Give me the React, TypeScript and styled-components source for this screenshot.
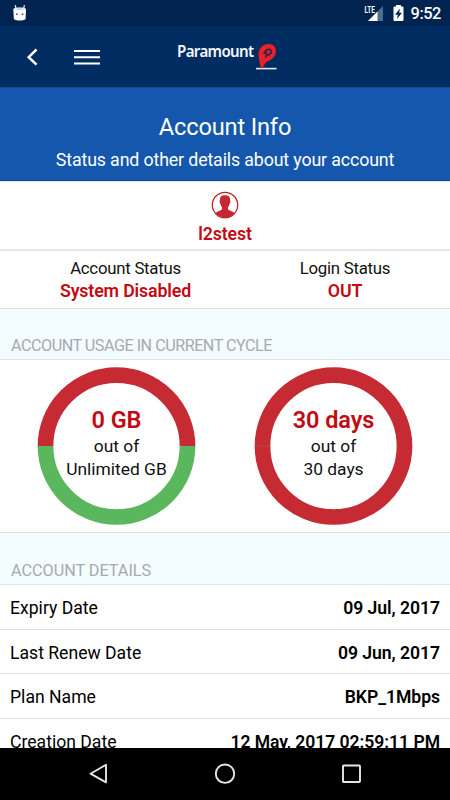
import React from "react";
import styled, { createGlobalStyle } from "styled-components";

const GlobalStyle = createGlobalStyle`
  * { box-sizing: border-box; }
  html, body { margin: 0; padding: 0; }
  body {
    width: 450px; height: 800px; overflow: hidden; background: #fff;
    font-family: Roboto, "Liberation Sans", sans-serif; color: #111;
  }
`;

const Screen = styled.div`
  width: 450px; height: 800px; display: flex; flex-direction: column; overflow: hidden;
`;
const StatusBar = styled.header`
  flex: none; height: 26px; background: #00234f; color: #fff;
  display: flex; align-items: center; justify-content: space-between; padding: 0 9px 0 12px;
`;
const Tray = styled.div`
  display: flex; align-items: center;
`;
const Clock = styled.span`
  font-size: 16.4px; font-weight: 500; line-height: 20px; letter-spacing: -0.45px; margin: 2px 0 0 7px;
`;
const AppBar = styled.nav`
  flex: none; height: 61px; background: #002c62; display: flex; align-items: flex-start; padding: 22px 0 0 26px;
`;
const Brand = styled.div`
  display: flex; align-items: flex-start; margin: -9px 0 0 77px; color: #f5f8fc;
`;
const BrandName = styled.span`
  width: 79px; font: 600 16.4px/24px "Noto Sans", sans-serif; letter-spacing: -0.7px; white-space: nowrap;
  transform: scaleX(0.92); transform-origin: left;
`;
const Hero = styled.section`
  flex: none; height: 94px; background: #1457ad; border-top: 1px solid #0e4a96; border-bottom: 1px solid #0b4a9d;
  color: #fff; text-align: center; padding-top: 24px;
`;
const Title = styled.h1`
  margin: 0; font-size: 23.6px; font-weight: 400; line-height: 30px; letter-spacing: -0.15px;
`;
const Subtitle = styled.p`
  margin: 6px 0 0; font-size: 17.8px; line-height: 24px; letter-spacing: -0.14px;
`;
const UserPanel = styled.section`
  flex: none; height: 70px; border-top: 1px solid #e5e5e5; border-bottom: 2px solid #e5e5e5;
  display: flex; flex-direction: column; align-items: center; gap: 3px; padding-top: 9px;
`;
const Highlight = styled.strong<{ $large?: boolean }>`
  color: #c40a14; font-size: ${(p) => (p.$large ? 23.5 : 17.8)}px; font-weight: 600; line-height: 23px;
  letter-spacing: ${(p) => (p.$large ? -0.1 : -0.15)}px;
`;
const StatusPanel = styled.section`
  flex: none; height: 57px; display: grid; grid-template-columns: 251px 188px; padding-top: 6px;
  ${Highlight} { margin-top: -1px; }
`;
const Stack = styled.div`
  display: flex; flex-direction: column; align-items: center;
`;
const Label = styled.span<{ $wide?: boolean }>`
  font-size: ${(p) => (p.$wide ? 17.4 : 16.8)}px; line-height: 23px; white-space: nowrap;
  letter-spacing: ${(p) => (p.$wide ? 0 : -0.25)}px;
`;
const SectionHeading = styled.h2<{ $height: number; $tracking: number }>`
  flex: none; height: ${(p) => p.$height}px; margin: 0; background: #f3fcff;
  border-top: 1px solid #dde1e2; border-bottom: 1px solid #dfe5e7;
  color: #a6abad; font-size: 16.2px; font-weight: 400; line-height: 20px; letter-spacing: ${(p) => p.$tracking}px;
  display: flex; align-items: flex-end; padding: 0 11px 3px;
`;
const Charts = styled.section`
  flex: none; height: 172px; display: flex; justify-content: space-between; padding: 6.5px 37px 0;
`;
const Donut = styled.div`
  width: 159px; height: 159px; display: grid; place-items: center;
  > * { grid-area: 1 / 1; }
`;
const DonutText = styled(Stack)`
  padding-bottom: 2px;
  ${Highlight} { margin-bottom: 2.500px; }
`;
const Details = styled.dl`
  flex: 1; min-height: 0; margin: 0; overflow: hidden;
`;
const Row = styled.div`
  height: 44.5px; border-bottom: 1px solid #dfdfdf; padding: 3px 10px 0;
  display: flex; justify-content: space-between; align-items: center; color: #000;
  font-size: 17.6px; line-height: 24px;
`;
const Term = styled.dt`
  font-weight: 400;
`;
const Value = styled.dd`
  margin: 0; font-weight: 600; letter-spacing: -0.05px;
`;
const NavBar = styled.footer`
  flex: none; height: 52px; background: #000; display: flex; justify-content: space-between;
  padding: 15px 88px 0 87px;
`;

const Marshmallow = () => (
  <svg width="16" height="18" viewBox="0 0 16 18">
    <path d="M4 5 3.3 1.2M11.6 5l.8-3.8" stroke="#dce3ec" strokeWidth="1.3" />
    <path d="M1.3 5.5C1.3 2.9 14 2.9 14 5.5l-.4 9c-.2 2.7-11.5 2.7-11.8 0z" fill="#fff" />
    <path d="M2.5 5.2c2-1.3 8.500-1.300 10.500 0-2 1-8.500 1-10.500 0z" fill="#c5d2df" />
    <circle cx="4.900" cy="10.200" r=".9" fill="#3e5879" />
    <circle cx="10.500" cy="10.200" r=".9" fill="#3e5879" />
  </svg>
);

const Signal = styled.svg`
  margin-right: 9px;
`;

const Battery = () => (
  <svg width="11" height="18" viewBox="0 0 11 18">
    <path d="M3 1h5v1.500h1.500q1 0 1 1v12.500q0 1-1 1h-8q-1 0-1-1V3.500q0-1 1-1H3z" fill="#fff" />
    <path d="M7 4.500 2 10.700h2.800L4 15l5-6.300H6.200z" fill="#00234f" />
  </svg>
);

const BackChevron = () => (
  <svg width="12" height="18" viewBox="0 0 12 18">
    <path d="M10.500 1.500 2.700 9.200l7.800 7.500" fill="none" stroke="#fff" strokeWidth="2.500" />
  </svg>
);

const MenuIcon = styled.svg`
  margin-left: 36px;
`;
const PinIcon = styled.svg`
  margin-top: 4px;
`;

const Person = () => (
  <svg width="28" height="28" viewBox="0 0 28 28">
    <circle cx="14" cy="14" r="12.700" fill="#fff" stroke="#c51a26" strokeWidth="1.200" />
    <path d="M14 4.300c3.600 0 5.300 1.600 5.100 5 .7 1 .3 2.800-.6 3.600-.3 1.600-.8 2.500-1.500 3.200v2.200c1.300 1.400 4.300 1.700 6.500 3.700a12.400 12.400 0 0 1-19 0c2.200-2 5.200-2.300 6.500-3.700v-2.200c-.7-.7-1.200-1.600-1.500-3.200-.9-.8-1.300-2.600-.6-3.600-.2-3.400 1.500-5 5.100-5z" fill="#c62832" />
  </svg>
);

const Ring = ({ lower, seam }: { lower: string; seam?: boolean }) => (
  <svg width="159" height="159" viewBox="0 0 159 159" fill="none" strokeWidth="15.700">
    <path d="M8.500 79.200a71 71 0 0 1 142 0" stroke="#c62a32" />
    <path d="M8.500 79a71 71 0 0 0 142 0" stroke={lower} />
    {seam && <path d="M1 79h15" stroke="#b54332" strokeWidth="1.500" />}
  </svg>
);

const details = [
  ["Expiry Date", "09 Jul, 2017"],
  ["Last Renew Date", "09 Jun, 2017"],
  ["Plan Name", "BKP_1Mbps"],
  ["Creation Date", "12 May, 2017 02:59:11 PM"],
];

export default function App() {
  return (
    <>
      <GlobalStyle />
      <Screen>
        <StatusBar>
          <Marshmallow />
          <Tray>
            <Signal width="20" height="18" viewBox="0 0 20 18">
              <path d="M19 2v15H4z" fill="#4c6c91" />
              <path d="M13.500 7.500V17H4z" fill="#fff" />
              <path d="M0 1h11.500v8H0z" fill="#00234f" />
              <text x="0.500" y="8.500" fill="#fff" fontFamily="Roboto, sans-serif" fontSize="9.800" fontWeight="700" textLength="10.500" lengthAdjust="spacingAndGlyphs">LTE</text>
            </Signal>
            <Battery />
            <Clock>9:52</Clock>
          </Tray>
        </StatusBar>
        <AppBar>
          <BackChevron />
          <MenuIcon width="26" height="18" viewBox="0 0 26 18">
            <path d="M0 3h26M0 9.200h26M0 15.400h26" stroke="#fff" strokeWidth="2" />
          </MenuIcon>
          <Brand>
            <BrandName>Paramount</BrandName>
            <PinIcon width="24" height="30" viewBox="0 0 24 30">
              <path d="M0 24.800h20.500v1.600H0z" fill="#e5e9ef" />
              <path d="M4.900 25.200 3 16C1.300 8.500 4.400 1.200 12 .9c4.900-.2 7.900 2.600 7.900 7 0 5-3.500 8.300-7.800 10.200-2.700 1.200-4 3.700-5.500 7.100z" fill="#ed2028" />
              <path d="M9.600 14.500c.2-2.200.5-3.700 1.200-5.600M8 10.800c.4-3.600 5.600-6.300 7-3.100.9 2.500-1.600 4.600-4 4.100" fill="none" stroke="#14264f" strokeWidth="1.500" />
            </PinIcon>
          </Brand>
        </AppBar>
        <Hero>
          <Title>Account Info</Title>
          <Subtitle>Status and other details about your account</Subtitle>
        </Hero>
        <UserPanel>
          <Person />
          <Highlight>l2stest</Highlight>
        </UserPanel>
        <StatusPanel>
          <Stack>
            <Label>Account Status</Label>
            <Highlight>System Disabled</Highlight>
          </Stack>
          <Stack>
            <Label>Login Status</Label>
            <Highlight>OUT</Highlight>
          </Stack>
        </StatusPanel>
        <SectionHeading $height={52} $tracking={-0.5}>ACCOUNT USAGE IN CURRENT CYCLE</SectionHeading>
        <Charts>
          <Donut>
            <Ring lower="#5ab75d" />
            <DonutText>
              <Highlight $large>0 GB</Highlight>
              <Label $wide>out of</Label>
              <Label $wide>Unlimited GB</Label>
            </DonutText>
          </Donut>
          <Donut>
            <Ring lower="#c62a32" seam />
            <DonutText>
              <Highlight $large>30 days</Highlight>
              <Label $wide>out of</Label>
              <Label $wide>30 days</Label>
            </DonutText>
          </Donut>
        </Charts>
        <SectionHeading $height={53} $tracking={0}>ACCOUNT DETAILS</SectionHeading>
        <Details>
          {details.map(([term, value]) => (
            <Row key={term}>
              <Term>{term}</Term>
              <Value>{value}</Value>
            </Row>
          ))}
        </Details>
        <NavBar>
          <svg width="22" height="22" viewBox="0 0 22 22" fill="none" stroke="#e6e6e6" strokeWidth="1.900">
            <path d="M19 1.800v17.500L3.500 10.700z" strokeLinejoin="round" />
          </svg>
          <svg width="22" height="22" viewBox="0 0 22 22" fill="none" stroke="#e6e6e6" strokeWidth="1.900">
            <circle cx="11" cy="10.700" r="9.200" />
          </svg>
          <svg width="22" height="22" viewBox="0 0 22 22" fill="none" stroke="#e6e6e6" strokeWidth="1.900">
            <rect x="3" y="2.500" width="17" height="16.500" rx=".8" />
          </svg>
        </NavBar>
      </Screen>
    </>
  );
}
